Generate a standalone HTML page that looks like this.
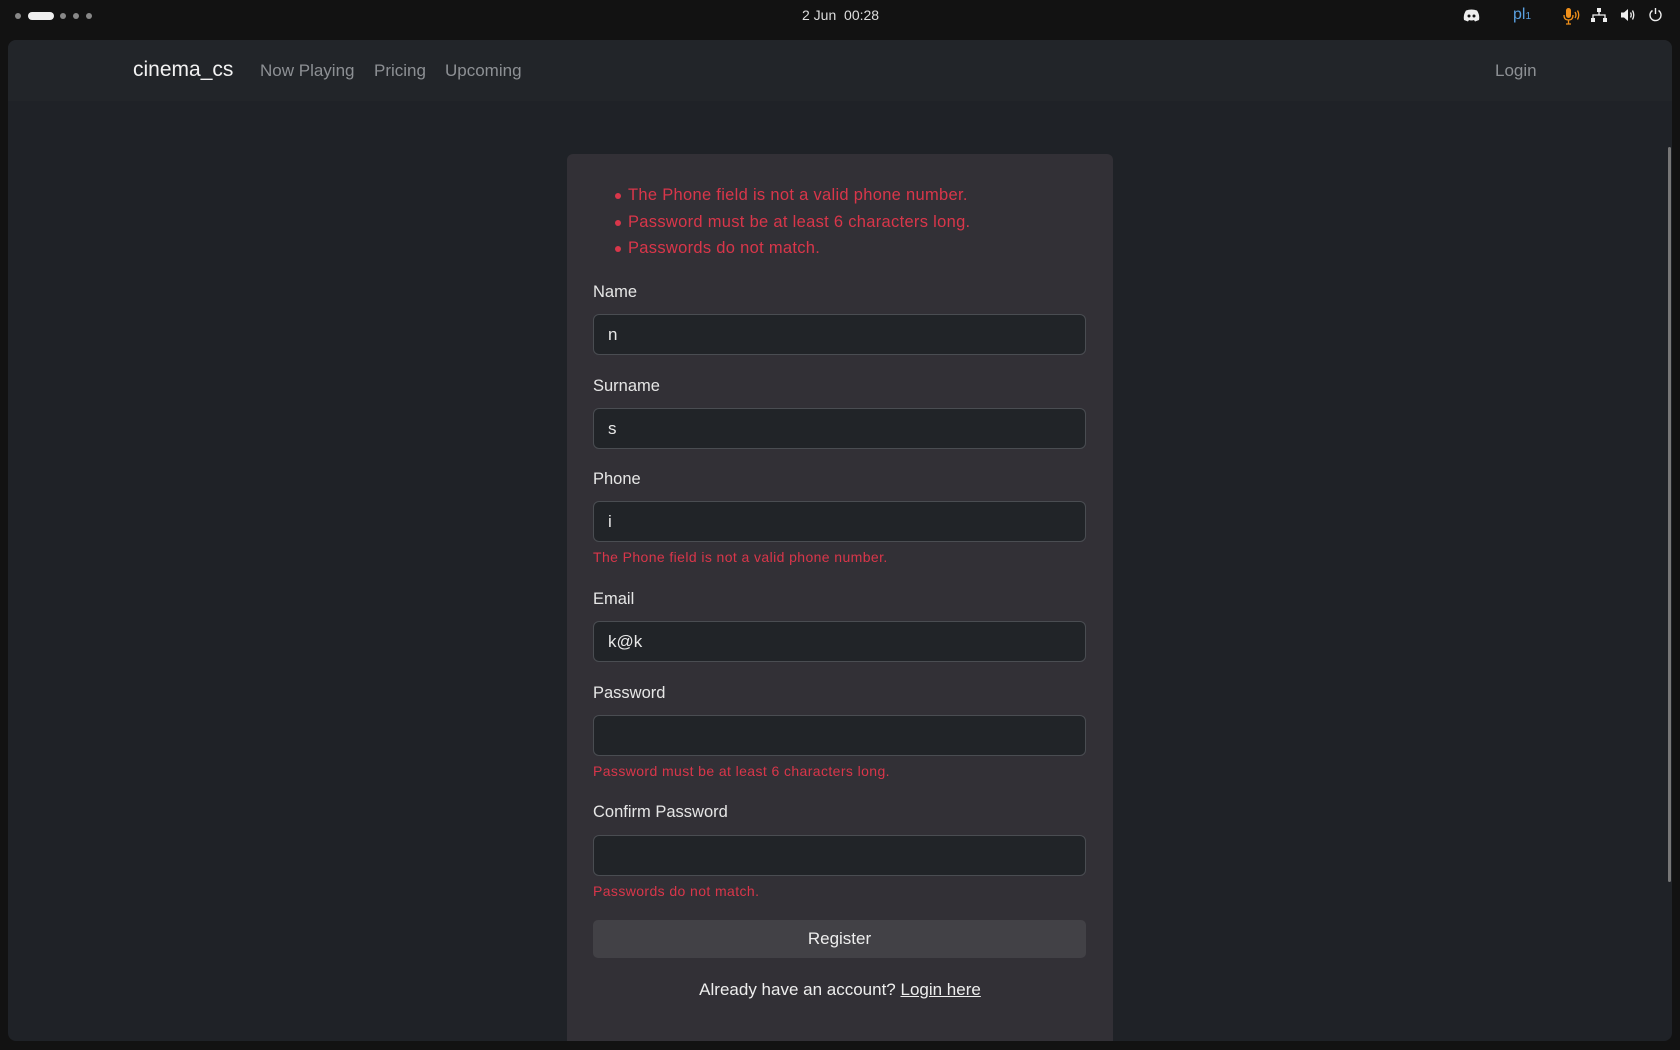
<!DOCTYPE html>
<html><head><meta charset="utf-8"><style>
*{margin:0;padding:0;box-sizing:border-box}
body{width:1680px;height:1050px;background:#121212;font-family:"Liberation Sans",sans-serif;position:relative;overflow:hidden}
.a{position:absolute;white-space:nowrap}
#win{position:absolute;left:8px;top:40px;width:1664px;height:1001px;background:#1f2227;border-radius:8px;overflow:hidden}
#nav{position:absolute;left:0;top:0;width:1664px;height:61px;background:#222529}
.nl{color:#8d9094;font-size:17px;top:21px}
#card{position:absolute;left:559px;top:114px;width:546px;height:900px;background:#323036;border-radius:6px}
.err{color:#d9364a;font-size:16.5px;left:61px;letter-spacing:0.3px}
.dot{position:absolute;left:-13px;top:7px;width:6px;height:6px;border-radius:50%;background:#d9364a}
.lb{color:#e6e6e6;font-size:16.5px;left:26px}
.in{position:absolute;left:26px;width:493px;height:41px;background:#212428;border:1px solid #4a4d52;border-radius:6px;color:#e8e8e8;font-size:17px;padding:10px 14px}
.fe{color:#d9364a;font-size:14px;left:26px;letter-spacing:0.4px}
</style></head><body>
<div class="a" style="left:15px;top:13px;width:6px;height:6px;border-radius:50%;background:#888"></div>
<div class="a" style="left:28px;top:12px;width:26px;height:8px;border-radius:4px;background:#eee"></div>
<div class="a" style="left:60px;top:13px;width:6px;height:6px;border-radius:50%;background:#888"></div>
<div class="a" style="left:73px;top:13px;width:6px;height:6px;border-radius:50%;background:#888"></div>
<div class="a" style="left:86px;top:13px;width:6px;height:6px;border-radius:50%;background:#888"></div>
<div class="a" style="left:802px;top:7px;color:#ddd;font-size:14px">2 Jun&nbsp; 00:28</div>
<svg class="a" style="left:1463px;top:9px" width="17" height="13" viewBox="0 0 17 13"><path d="M3 1.5Q8.5-.5 14 1.5Q17 6 16 11L12 12.5 11 11Q8.5 12 6 11L5 12.5 1 11Q0 6 3 1.5Z" fill="#eee"/><circle cx="6" cy="7" r="1.5" fill="#121212"/><circle cx="11" cy="7" r="1.5" fill="#121212"/></svg>
<div class="a" style="left:1513px;top:6px;color:#5aa0e0;font-size:16px">pl<span style="font-size:10px">1</span></div>
<svg class="a" style="left:1563px;top:7px" width="18" height="18" viewBox="0 0 18 18"><rect x="3" y="1" width="5" height="10" rx="2.5" fill="#f0901a"/><path d="M1 8Q1 13 5.5 13Q10 13 10 8M5.5 13V17M3 17H8M12 5Q14 8 12 11M14.5 3.5Q17 8 14.5 12.5" stroke="#f0901a" stroke-width="1.3" fill="none"/></svg>
<svg class="a" style="left:1591px;top:8px" width="16" height="14" viewBox="0 0 16 14"><rect x="6" y="0" width="4" height="4" fill="#eee"/><rect x="0" y="10" width="4" height="4" fill="#eee"/><rect x="12" y="10" width="4" height="4" fill="#eee"/><path d="M8 4V7M2 10V7H14V10" stroke="#eee" stroke-width="1.3" fill="none"/></svg>
<svg class="a" style="left:1620px;top:8px" width="16" height="14" viewBox="0 0 16 14"><path d="M1 4.5H4L8 1V13L4 9.5H1Z" fill="#eee"/><path d="M10.5 4.5Q12 7 10.5 9.5M12.5 2.5Q15 7 12.5 11.5" stroke="#eee" stroke-width="1.3" fill="none"/></svg>
<svg class="a" style="left:1648px;top:7px" width="15" height="15" viewBox="0 0 15 15"><path d="M4.5 3.5A5.5 5.5 0 1 0 10.5 3.5M7.5 1V7" stroke="#eee" stroke-width="1.4" fill="none"/></svg>
<div id="win">
<div id="nav">
<div class="a" style="left:125px;top:18px;color:#f2f2f2;font-size:21px">cinema_cs</div>
<div class="a nl" style="left:252px">Now Playing</div>
<div class="a nl" style="left:366px">Pricing</div>
<div class="a nl" style="left:437px">Upcoming</div>
<div class="a nl" style="left:1487px">Login</div>
</div>
<div class="a" style="left:1660px;top:107px;width:3px;height:735px;background:#777;border-radius:2px"></div>
<div id="card">
<div class="a err" style="top:32px"><span class="dot"></span>The Phone field is not a valid phone number.</div>
<div class="a err" style="top:59px"><span class="dot"></span>Password must be at least 6 characters long.</div>
<div class="a err" style="top:85px"><span class="dot"></span>Passwords do not match.</div>
<div class="a lb" style="top:129px">Name</div>
<div class="in" style="top:160px">n</div>
<div class="a lb" style="top:223px">Surname</div>
<div class="in" style="top:254px">s</div>
<div class="a lb" style="top:316px">Phone</div>
<div class="in" style="top:347px">i</div>
<div class="a fe" style="top:395px">The Phone field is not a valid phone number.</div>
<div class="a lb" style="top:436px">Email</div>
<div class="in" style="top:467px">k@k</div>
<div class="a lb" style="top:530px">Password</div>
<div class="in" style="top:561px"></div>
<div class="a fe" style="top:609px">Password must be at least 6 characters long.</div>
<div class="a lb" style="top:649px">Confirm Password</div>
<div class="in" style="top:681px"></div>
<div class="a fe" style="top:729px">Passwords do not match.</div>
<div class="a" style="left:26px;top:766px;width:493px;height:38px;background:#424146;border-radius:5px;color:#eee;font-size:17px;text-align:center;line-height:38px">Register</div>
<div class="a" style="left:0;width:546px;top:826px;text-align:center;color:#eee;font-size:17px">Already have an account? <u>Login here</u></div>
</div>
</div>
</body></html>
